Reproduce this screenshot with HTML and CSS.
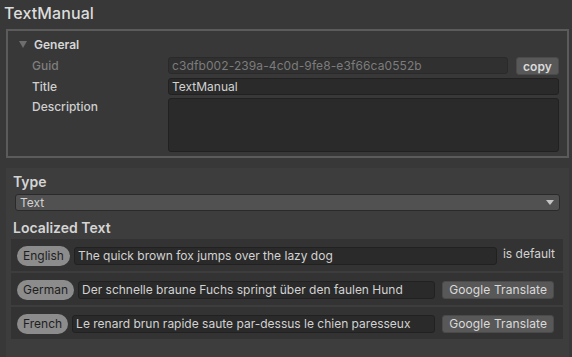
FILE: index.html
```html
<!DOCTYPE html>
<html lang="en">
<head>
  <meta charset="UTF-8">
  <title>TextManual</title>
  <link rel="stylesheet" href="styles.css">
</head>
<body>
  <h1 class="header">TextManual</h1>

  <div class="box">
    <div class="foldout">
      <span class="arrow"></span>
      <span class="foldout-label">General</span>
    </div>
    <div class="prop">
      <span class="label disabled">Guid</span>
      <div class="field disabled">c3dfb002-239a-4c0d-9fe8-e3f66ca0552b</div>
      <button class="btn bold">copy</button>
    </div>
    <div class="prop">
      <span class="label">Title</span>
      <div class="field">TextManual</div>
    </div>
    <div class="prop">
      <span class="label">Description</span>
      <div class="field area"></div>
    </div>
  </div>

  <div class="section">
    <div class="section-title">Type</div>
    <div class="dropdown">
      <span>Text</span>
      <span class="dd-arrow"></span>
    </div>

    <div class="section-title loc">Localized Text</div>

    <div class="lang-row">
      <span class="pill">English</span>
      <div class="field">The quick brown fox jumps over the lazy dog</div>
      <span class="note">is default</span>
    </div>
    <div class="lang-row">
      <span class="pill">German</span>
      <div class="field">Der schnelle braune Fuchs springt über den faulen Hund</div>
      <button class="btn">Google Translate</button>
    </div>
    <div class="lang-row">
      <span class="pill">French</span>
      <div class="field">Le renard brun rapide saute par-dessus le chien paresseux</div>
      <button class="btn">Google Translate</button>
    </div>
  </div>
</body>
</html>
```

FILE: styles.css
```css
html, body {
  margin: 0;
  padding: 0;
  height: 100%;
}

body {
  background: #383838;
  color: #d2d2d2;
  font-family: Inter, "Noto Sans", sans-serif;
  font-size: 12px;
  display: flex;
  flex-direction: column;
  overflow: hidden;
}

.header {
  font-size: 16px;
  font-weight: 500;
  margin: 0;
  padding: 3px 4px 0;
  height: 26px;
  line-height: 20px;
  color: #dcdcdc;
  letter-spacing: 0.1px;
}

.box {
  margin: 0 3px 0 6px;
  border: 2px solid #5b5b5b;
  padding: 4px 8px 4px 24px;
  display: flex;
  flex-direction: column;
  gap: 3px;
}

.foldout {
  display: flex;
  align-items: center;
  height: 18px;
  margin-left: -13px;
  margin-bottom: 1px;
}

.arrow {
  width: 0;
  height: 0;
  border-left: 4px solid transparent;
  border-right: 4px solid transparent;
  border-top: 7px solid #6e6e6e;
  margin-right: 7px;
}

.foldout-label {
  font-weight: 600;
  color: #d6d6d6;
}

.prop {
  display: flex;
  align-items: flex-start;
  gap: 8px;
}

.label {
  width: 128px;
  flex: none;
  line-height: 17px;
  font-weight: 500;
  color: #cfcfcf;
}

.label.disabled {
  color: #7f7f7f;
}

.field {
  flex: 1;
  height: 17px;
  line-height: 16px;
  padding: 0 3px;
  box-sizing: border-box;
  background: #2a2a2a;
  border: 1px solid #212121;
  border-radius: 3px;
  color: #d2d2d2;
  white-space: nowrap;
  overflow: hidden;
}

.field.disabled {
  background: #303030;
  border-color: #2a2a2a;
  color: #7c7c7c;
  letter-spacing: 0.1px;
}

.field.area {
  height: 54px;
}

.btn {
  font-family: inherit;
  font-size: 12px;
  color: #dadada;
  background: #585858;
  border: 1px solid #4a4a4a;
  border-radius: 3px;
  height: 18px;
  padding: 0 6px;
  line-height: 15px;
  letter-spacing: 0.1px;
}

.btn.bold {
  font-weight: 600;
}

.section {
  flex: 1;
  margin: 10px 3px 0 6px;
  background: #3d3d3d;
  padding: 6px 6px 0 5px;
}

.section-title {
  font-size: 14px;
  font-weight: 600;
  color: #d4d4d4;
  line-height: 16px;
  padding-left: 2px;
  margin-bottom: 4px;
}

.section-title.loc {
  margin-top: 9px;
  margin-bottom: 3px;
}

.dropdown {
  display: flex;
  align-items: center;
  justify-content: space-between;
  height: 17px;
  box-sizing: border-box;
  margin: 0 3px 0 4px;
  padding: 0 4px;
  background: #515151;
  border: 1px solid #2a2a2a;
  border-radius: 3px;
  color: #d2d2d2;
}

.dd-arrow {
  width: 0;
  height: 0;
  border-left: 4px solid transparent;
  border-right: 4px solid transparent;
  border-top: 5px solid #c4c4c4;
  margin-right: 1px;
}

.lang-row {
  display: flex;
  align-items: center;
  gap: 4px;
  height: 32px;
  box-sizing: border-box;
  background: #333333;
  padding: 1px 9px 0 6px;
  margin-bottom: 2px;
}

.lang-row .field {
  height: 18px;
}

.pill {
  background: #8c8c8c;
  color: #1e1e1e;
  border-radius: 10px;
  height: 20px;
  line-height: 20px;
  padding: 0 6px;
}

.note {
  margin-left: 2px;
  margin-right: -1px;
  margin-top: -4px;
}

.lang-row .btn {
  margin-left: 3px;
}
```
